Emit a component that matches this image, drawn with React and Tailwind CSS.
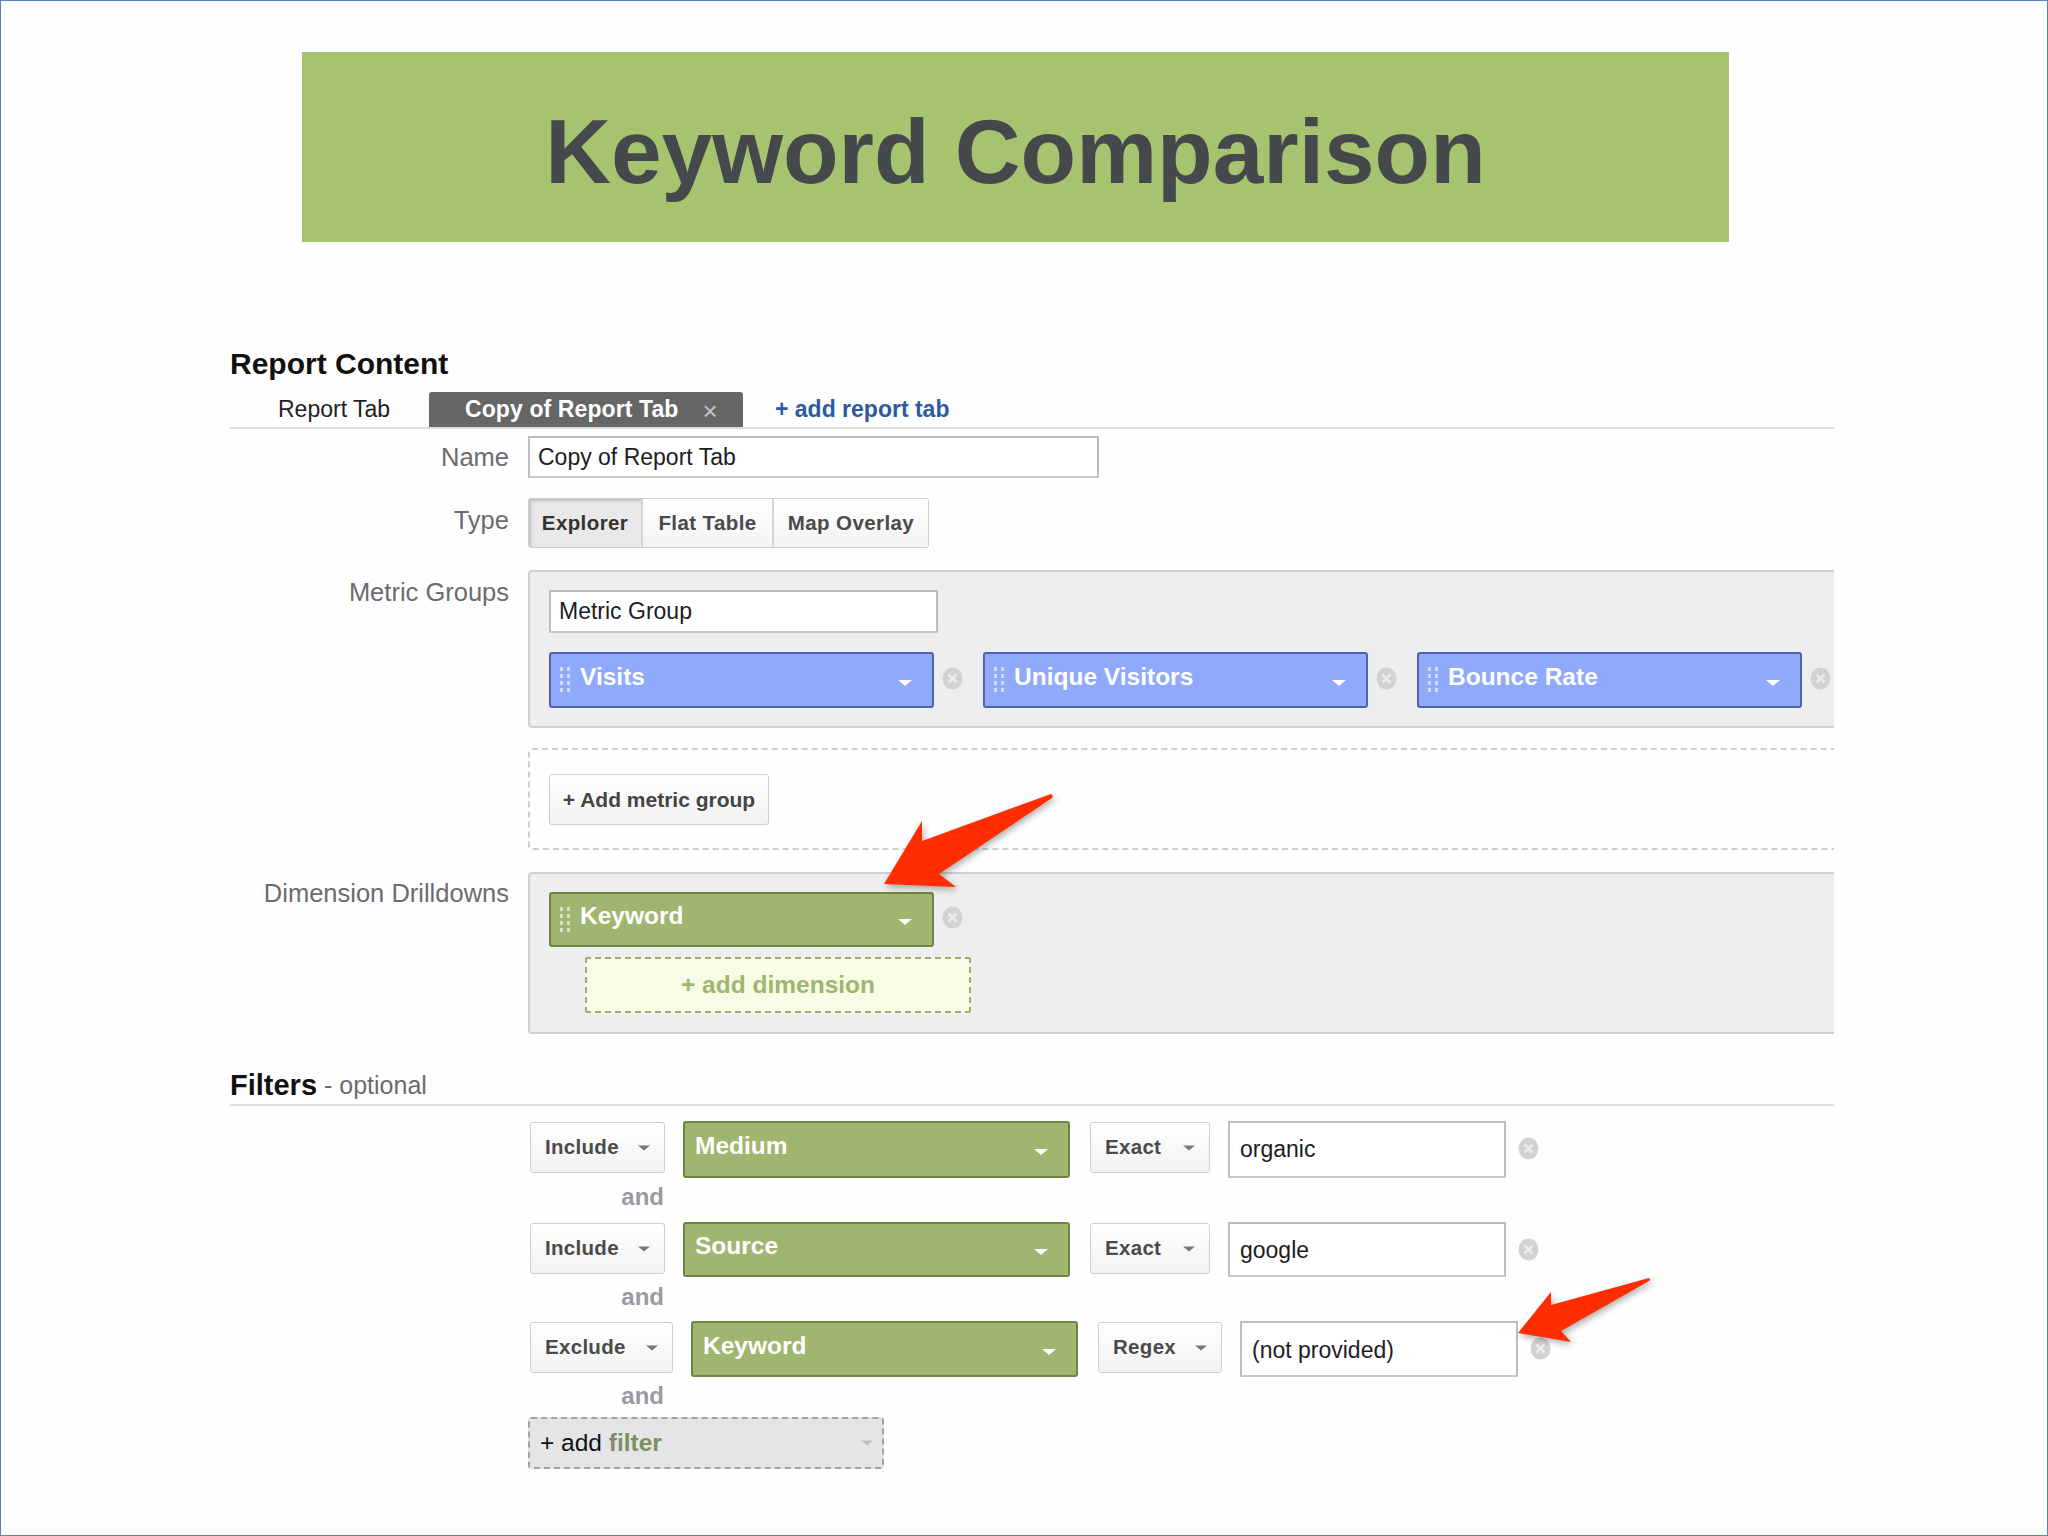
import React from 'react';

const Caret = ({ color = '#ffffff', className = '' }) => (
  <svg width="14" height="6" viewBox="0 0 14 6" className={className}>
    <path d="M0 0H14L7 6Z" fill={color} />
  </svg>
);

const Grip = () => (
  <svg width="10" height="26" viewBox="0 0 10 26" className="shrink-0" fill="#ffffff" fillOpacity="0.6">
    {[0, 7, 14, 21].map((y) => (
      <g key={y}>
        <rect x="0" y={y} width="3" height="4" />
        <rect x="7" y={y} width="3" height="4" />
      </g>
    ))}
  </svg>
);

const CloseDot = ({ className = '' }) => (
  <svg width="21" height="23" viewBox="0 0 21 23" className={`shrink-0 ${className}`}>
    <ellipse cx="10.5" cy="11.5" rx="10" ry="11" fill="#d2d2d4" />
    <path d="M6.5 7.5L14.5 15.5M14.5 7.5L6.5 15.5" stroke="#ececee" strokeWidth="2.5" />
  </svg>
);

const Pill = ({ label, blue, grip, h = 'h-[56px]', w = 'w-[385px]' }) => (
  <div
    className={`${w} ${h} shrink-0 flex items-center rounded-[3px] border-2 pr-[20px] ${
      blue ? 'bg-[#8fa9fd] border-[#4d65ab]' : 'bg-[#a0b56f] border-[#6f8546]'
    } ${grip ? 'pl-[9px]' : 'pl-[10px]'}`}
  >
    {grip && <Grip />}
    <span className={`flex-1 text-[24.5px] font-bold text-white mb-[6px] ${grip ? 'ml-[10px]' : ''}`}>{label}</span>
    <Caret className="mt-[5px]" />
  </div>
);

const SelectBtn = ({ label, w }) => (
  <div
    className={`${w} h-[51px] mt-[1px] shrink-0 flex items-center justify-between pl-[14px] pr-[14px] rounded-[3px] border border-[#cfcfcf] bg-linear-to-b from-white to-[#f2f2f2] text-[20.5px] font-bold tracking-[0.3px] text-[#4a4a4a]`}
  >
    <span className="mb-[1px]">{label}</span>
    <Caret color="#777777" className="w-[12px]" />
  </div>
);

const TextBox = ({ value, w, h, size = 'text-[23px]', pl = 'pl-[10px]', pt = '' }) => (
  <div
    className={`${w} ${h} ${pt} shrink-0 flex items-center ${pl} bg-white border-2 border-[#bdbdbd] border-b-[#c9c9c9] ${size} text-[#1c1c24]`}
  >
    {value}
  </div>
);

const FilterRow = ({ verb, verbW, field, match, matchW, value, h, pt }) => (
  <div className="flex items-start gap-x-[18px]">
    <SelectBtn label={verb} w={verbW} />
    <Pill label={field} w="w-[387px]" h={h} />
    <div className="ml-[2px]">
      <SelectBtn label={match} w={matchW} />
    </div>
    <TextBox value={value} w="w-[278px]" h={h} pt={pt} />
    <CloseDot className="-ml-[6px] mt-[16px]" />
  </div>
);

const And = ({ h, pb }) => (
  <div className={`${h} ${pb} w-[134px] flex items-center justify-end text-[24px] font-bold text-[#9b9b9f]`}>and</div>
);

const Field = ({ label, pt, children }) => (
  <div className="grid grid-cols-[279px_1fr] gap-x-[19px]">
    <div className={`${pt} text-right text-[25.5px] leading-[30px] text-[#6b6b70]`}>{label}</div>
    {children}
  </div>
);

export default function App() {
  return (
    <div className="relative w-[2048px] h-[1536px] overflow-hidden border border-[#5a82b8] bg-[#fefefe] pt-[51px] font-['Liberation_Sans',Arial,sans-serif]">
      {/* Title banner */}
      <div className="ml-[301px] w-[1427px] h-[190px] pt-[10px] flex items-center justify-center bg-[#a6c46f] text-[91px] font-bold text-[#46494c]">
        Keyword Comparison
      </div>

      <div className="ml-[229px] w-[1604px] mt-[103px]">
        <div className="h-[36px] flex items-center text-[30px] font-bold text-[#111111]">Report Content</div>

        {/* Tabs */}
        <div className="mt-[11px] h-[37px] flex items-stretch border-b-2 border-[#dddddd]">
          <div className="w-[199px] pl-[48px] flex items-center text-[23px] text-[#1f1f1f]">Report Tab</div>
          <div className="w-[314px] pl-[36px] flex items-center rounded-t-[3px] bg-[#666666] text-[23px] font-bold text-white">
            <span className="tracking-[0.1px]">Copy of Report Tab</span>
            <span className="ml-[24px] mt-[3px] text-[26px] leading-none font-normal text-[#c4c4c4]">×</span>
          </div>
          <div className="ml-[32px] flex items-center text-[23px] font-bold text-[#2c5b9e]">+ add report tab</div>
        </div>

        <div className="mt-[7px]">
          <Field label="Name" pt="pt-[6px]">
            <TextBox value="Copy of Report Tab" w="w-[571px]" h="h-[42px]" pl="pl-[8px]" />
          </Field>
        </div>

        {/* Type switcher */}
        <div className="mt-[20px]">
          <Field label="Type" pt="pt-[7px]">
            <div className="w-[401px] h-[50px] flex rounded-[3px] border border-[#cfcfcf] bg-white text-[20.5px] font-bold tracking-[0.4px] text-[#4a4a4a]">
              <div className="w-[114px] flex items-center justify-center border-r-2 border-[#d5d5d5] bg-[#e9e9e9] shadow-[inset_2px_2px_3px_rgba(0,0,0,0.18)] text-[#333333]">
                Explorer
              </div>
              <div className="w-[131px] flex items-center justify-center border-r-2 border-[#d5d5d5] bg-linear-to-b from-white to-[#f3f3f3]">
                Flat Table
              </div>
              <div className="flex-1 flex items-center justify-center bg-linear-to-b from-white to-[#f3f3f3]">
                Map Overlay
              </div>
            </div>
          </Field>
        </div>

        {/* Metric groups */}
        <div className="mt-[22px]">
          <Field label="Metric Groups" pt="pt-[7px]">
            <div className="h-[158px] pl-[19px] pt-[18px] rounded-l-[4px] border-2 border-r-0 border-[#d0d0d2] bg-[#eeeef0]">
              <TextBox value="Metric Group" w="w-[389px]" h="h-[43px]" pl="pl-[8px]" />
              <div className="mt-[19px] flex gap-x-[20px]">
                {['Visits', 'Unique Visitors', 'Bounce Rate'].map((m) => (
                  <div key={m} className="flex items-center gap-x-[8px]">
                    <Pill label={m} blue grip />
                    <CloseDot className="-mt-[4px]" />
                  </div>
                ))}
              </div>
            </div>
          </Field>
        </div>

        <div className="mt-[20px]">
          <Field label="" pt="">
            <div className="h-[102px] pl-[19px] pt-[24px] rounded-l-[4px] border-2 border-r-0 border-dashed border-[#cdcdcd]">
              <div className="w-[220px] h-[51px] flex items-center justify-center rounded-[3px] border border-[#cfcfcf] bg-linear-to-b from-white to-[#f2f2f2] text-[21px] font-bold text-[#444444]">
                + Add metric group
              </div>
            </div>
          </Field>
        </div>

        {/* Dimension drilldowns */}
        <div className="mt-[22px]">
          <Field label="Dimension Drilldowns" pt="pt-[6px]">
            <div className="h-[162px] pl-[19px] pt-[18px] rounded-l-[4px] border-2 border-r-0 border-[#d0d0d2] bg-[#eeeef0]">
              <div className="flex items-center gap-x-[8px]">
                <Pill label="Keyword" grip h="h-[55px]" />
                <CloseDot className="-mt-[4px]" />
              </div>
              <div className="ml-[36px] mt-[10px] w-[386px] h-[56px] flex items-center justify-center rounded-[2px] border-2 border-dashed border-[#9bb06a] bg-[#f6fde4] text-[24.5px] font-bold text-[#a0b56f]">
                + add dimension
              </div>
            </div>
          </Field>
        </div>

        {/* Filters */}
        <div className="mt-[33px] h-[39px] flex items-center border-b-2 border-[#dddddd]">
          <span className="text-[29px] font-bold text-[#111111]">Filters</span>
          <span className="ml-[7px] text-[25px] text-[#6b6b70]">- optional</span>
        </div>

        <div className="ml-[300px] mt-[15px]">
          <FilterRow verb="Include" verbW="w-[135px]" field="Medium" match="Exact" matchW="w-[120px]" value="organic" h="h-[57px]" />
          <And h="h-[44px]" pb="pb-[7px]" />
          <FilterRow verb="Include" verbW="w-[135px]" field="Source" match="Exact" matchW="w-[120px]" value="google" h="h-[55px]" pt="pt-[2px]" />
          <And h="h-[44px]" pb="pb-[5px]" />
          <FilterRow verb="Exclude" verbW="w-[143px]" field="Keyword" match="Regex" matchW="w-[124px]" value="(not provided)" h="h-[56px]" pt="pt-[3px]" />
          <And h="h-[40px]" pb="pb-[2px]" />
          <div className="-ml-[2px] w-[356px] h-[52px] flex items-center justify-between pl-[10px] pr-[9px] rounded-[3px] border-2 border-dashed border-[#a3a3a6] bg-[#e5e5e7]">
            <span className="text-[24.5px] text-[#111111]">
              + add <span className="font-bold text-[#7c9060]">filter</span>
            </span>
            <Caret color="#bcbcbe" className="w-[12px]" />
          </div>
        </div>
      </div>

      {/* Red callout arrows */}
      <svg width="180" height="100" viewBox="0 0 180 100" className="absolute left-[880px] top-[790px] drop-shadow-[2px_3px_3px_rgba(0,0,0,0.3)]">
        <path d="M3 93L41 30V50L170 3Q173 5 171 7L58 83L75 96Z" fill="#ff2d00" />
      </svg>
      <svg width="140" height="72" viewBox="0 0 140 72" className="absolute left-[1515px] top-[1275px] drop-shadow-[2px_3px_3px_rgba(0,0,0,0.3)]">
        <path d="M2 57L35 16V29L133 2Q135 4 133 5L45 55L55 66Z" fill="#ff2d00" />
      </svg>
    </div>
  );
}
